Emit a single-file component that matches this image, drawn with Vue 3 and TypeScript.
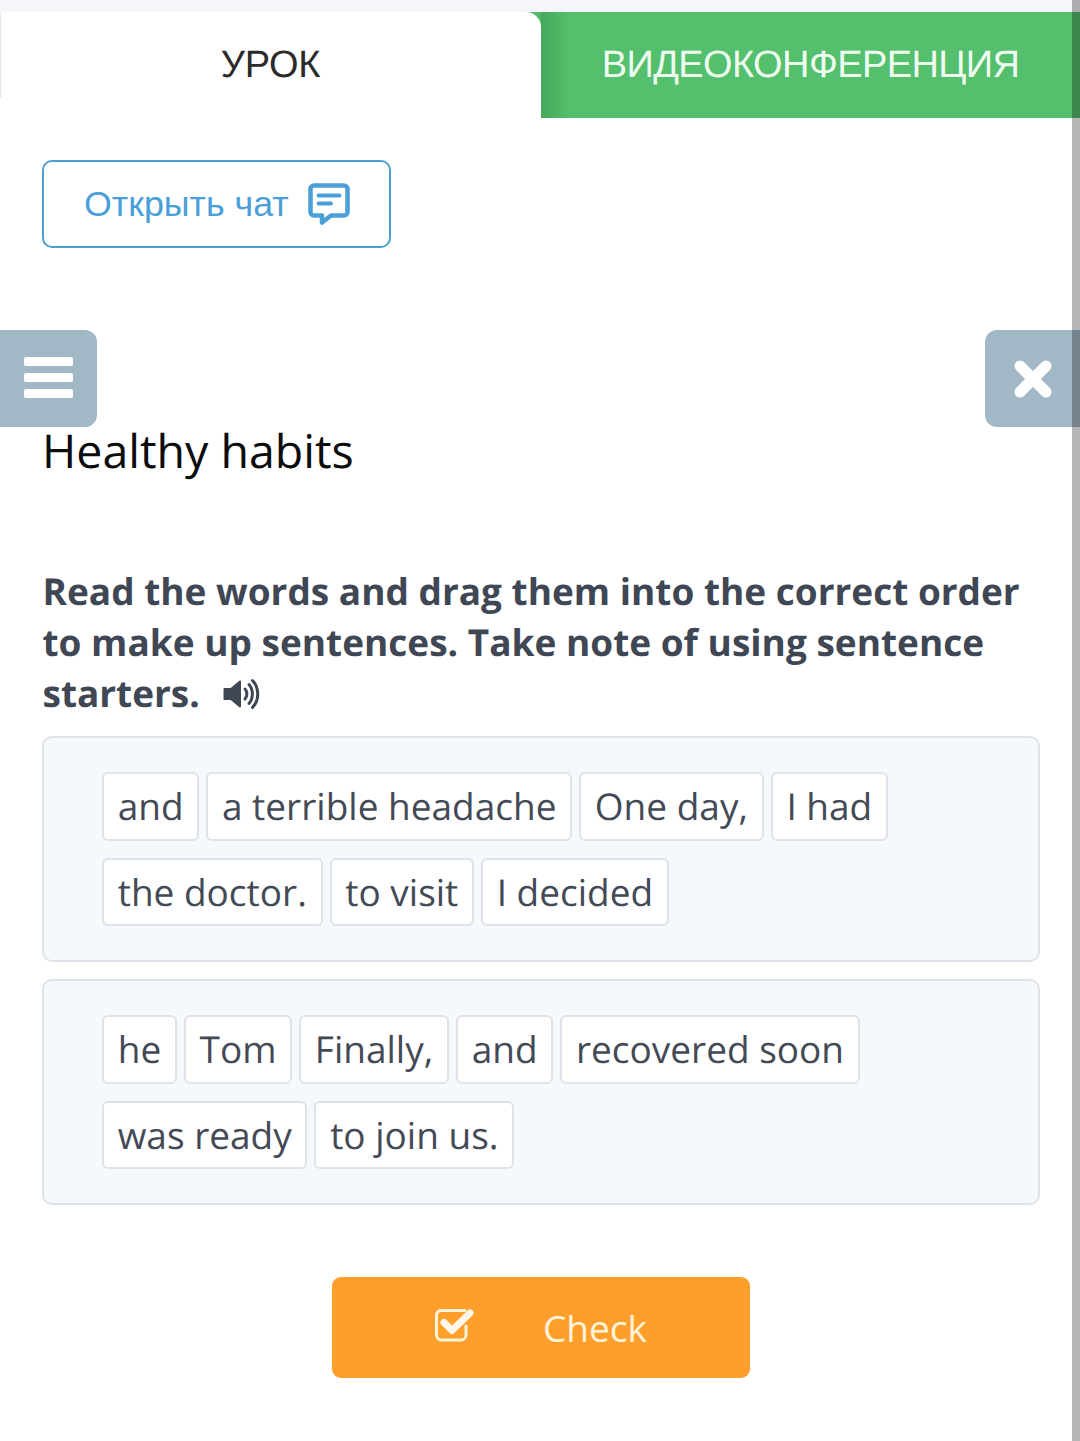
<script setup lang="ts">
const groups: string[][][] = [
  [["and", "a terrible headache", "One day,", "I had"], ["the doctor.", "to visit", "I decided"]],
  [["he", "Tom", "Finally,", "and", "recovered soon"], ["was ready", "to join us."]],
];
</script>

<template>
  <div class="page">
    <div class="top-strip"></div>
    <div class="tabs">
      <div class="tab tab-active">УРОК</div>
      <div class="tab tab-green">ВИДЕОКОНФЕРЕНЦИЯ</div>
    </div>

    <div class="chat-wrap">
      <button class="chat-btn">
        <span>Открыть чат</span>
        <svg class="chat-icon" width="42" height="42" viewBox="0 0 42 42" fill="none">
          <path d="M6 2.500H36A3.500 3.500 0 0 1 39.500 6V29A3.500 3.500 0 0 1 36 32.500H23L14 39.500V32.500H6A3.500 3.500 0 0 1 2.500 29V6A3.500 3.500 0 0 1 6 2.500Z" stroke="#4a9fd8" stroke-width="4.500" stroke-linejoin="round" />
          <path d="M10.500 12.500H31.500" stroke="#4a9fd8" stroke-width="3.800" stroke-linecap="round" />
          <path d="M10.500 20.500H23" stroke="#4a9fd8" stroke-width="3.800" stroke-linecap="round" />
        </svg>
      </button>
    </div>

    <div class="toolbar">
      <button class="tool tool-left" aria-label="menu">
        <span class="bar"></span><span class="bar"></span><span class="bar"></span>
      </button>
      <button class="tool tool-right" aria-label="close">
        <svg width="40" height="40" viewBox="0 0 40 40">
          <path d="M7 7L33 33M33 7L7 33" stroke="#fff" stroke-width="11" stroke-linecap="round" />
        </svg>
      </button>
    </div>

    <main class="content">
      <h1 class="title">Healthy habits</h1>
      <p class="task">
        Read the words and drag them into the correct order to make up sentences. Take note of using sentence starters.
        <svg class="sound" width="38" height="32" viewBox="0 0 38 32">
          <path d="M1.500 11H8L17 3.500V28.500L8 21H1.500Z" fill="#3f4754" stroke="#3f4754" stroke-width="2" stroke-linejoin="round" />
          <path d="M22 11C24.500 13.500 24.500 18.500 22 21" fill="none" stroke="#3f4754" stroke-width="3" stroke-linecap="round" />
          <path d="M26 6.500C30.500 11.500 30.500 20.500 26 25.500" fill="none" stroke="#3f4754" stroke-width="3" stroke-linecap="round" />
          <path d="M29.500 2.500C36.500 9.500 36.500 22.500 29.500 29.500" fill="none" stroke="#3f4754" stroke-width="3" stroke-linecap="round" />
        </svg>
      </p>

      <section v-for="(group, g) in groups" :key="g" class="box">
        <div v-for="(row, r) in group" :key="r" class="row">
          <span v-for="word in row" :key="word" class="chip">{{ word }}</span>
        </div>
      </section>

      <div class="check-wrap">
        <button class="check-btn">
          <svg class="check-icon" width="40" height="36" viewBox="0 0 40 36" fill="none">
            <path d="M31 19V28A5 5 0 0 1 26 33H6A5 5 0 0 1 1.500 28V8A5 5 0 0 1 6 3.500H30" stroke="#fff3d9" stroke-width="3" stroke-linecap="round" />
            <path d="M9 15.500L17 23.500L35 6" stroke="#fff8ea" stroke-width="7" stroke-linecap="round" stroke-linejoin="round" />
          </svg>
          <span>Check</span>
        </button>
      </div>
    </main>

    <div class="scrollbar"></div>
  </div>
</template>

<style>
html, body { margin: 0; background: #fff; }
</style>

<style scoped>
.page {
  position: relative;
  width: 1080px;
  height: 1441px;
  overflow: hidden;
  background: #fff;
  font-family: "Open Sans", sans-serif;
  text-rendering: geometricPrecision;
}
button { font-family: inherit; cursor: pointer; }
.top-strip { height: 12px; background: #f4f6f9; }
.tabs { display: flex; height: 106px; }
.tab {
  display: flex;
  align-items: center;
  justify-content: center;
  padding-top: 1px;
  font-family: "Liberation Sans", Arial, sans-serif;
  font-size: 38px;
}
.tab-active {
  width: 541px;
  color: #2b2b2b;
  letter-spacing: -0.2px;
  background: #fff;
  border-top-right-radius: 15px;
  position: relative;
  z-index: 1;
}
.tab-active::before {
  content: "";
  position: absolute;
  left: 0;
  top: 0;
  width: 1px;
  height: 86px;
  background: #e6e9ec;
}
.tab-green {
  flex: 1;
  color: #eefcf0;
  letter-spacing: -0.6px;
  background: linear-gradient(90deg, #46a85c 0, #54bf6c 28px);
  position: relative;
}
.tab-green::before {
  content: "";
  position: absolute;
  left: -15px;
  top: 0;
  width: 15px;
  height: 15px;
  background: #53b869;
  z-index: 0;
}
.chat-wrap { padding: 42px 0 0 42px; }
.chat-btn {
  display: flex;
  align-items: center;
  gap: 19.5px;
  width: 349px;
  height: 88px;
  padding: 0 0 0 40px;
  box-sizing: border-box;
  border: 2px solid #4a9fd0;
  border-radius: 10px;
  background: #fff;
  color: #4a9fd8;
  font-family: "Liberation Sans", Arial, sans-serif;
  font-size: 35.8px;
}
.chat-icon { flex: none; }
.toolbar {
  display: flex;
  justify-content: space-between;
  margin-top: 82px;
}
.tool {
  display: flex;
  flex-direction: column;
  align-items: center;
  justify-content: center;
  height: 97px;
  border: 0;
  padding: 0;
  background: #a3b8c6;
}
.tool-left { width: 97px; gap: 7px; padding-bottom: 2px; border-radius: 0 12px 12px 0; }
.tool-right { width: 95px; border-radius: 12px 0 0 12px; }
.bar { width: 49px; height: 9px; border-radius: 2px; background: #fff; }
.content { padding: 0 40px 0 42px; }
.title {
  margin: 0;
  color: #0c0c0c;
  font-size: 46.5px;
  font-weight: 400;
  line-height: 46px;
}
.task {
  margin: 92px 0 18px;
  padding-left: 0.5px;
  color: #3f4754;
  font-size: 37px;
  font-weight: 700;
  line-height: 51px;
}
.sound { margin-left: 14px; vertical-align: -3px; }
.box {
  display: flex;
  flex-direction: column;
  gap: 17px;
  padding: 34px 60px 34px 58px;
  margin-bottom: 17px;
  border: 2px solid #dde3e8;
  border-radius: 10px;
  background: #f5f9fd;
}
.row { display: flex; gap: 7px; }
.chip {
  display: block;
  height: 68.5px;
  box-sizing: border-box;
  padding: 0 13.7px;
  border: 2px solid #dde3e8;
  border-radius: 6px;
  background: #fff;
  color: #434a56;
  font-size: 37px;
  line-height: 64.5px;
}
.check-wrap { display: flex; justify-content: center; padding-top: 55px; }
.check-btn {
  display: flex;
  align-items: center;
  width: 418px;
  height: 101px;
  padding: 0 0 0 103px;
  box-sizing: border-box;
  border: 0;
  border-radius: 9px;
  background: #fe9f2b;
  color: #fff3d9;
  font-size: 37px;
}
.check-icon { flex: none; margin-right: 68px; margin-top: -6px; }
.scrollbar {
  position: absolute;
  top: 0;
  right: 0;
  bottom: 0;
  width: 8px;
  background: rgba(0, 0, 0, 0.29);
  z-index: 5;
}
</style>
